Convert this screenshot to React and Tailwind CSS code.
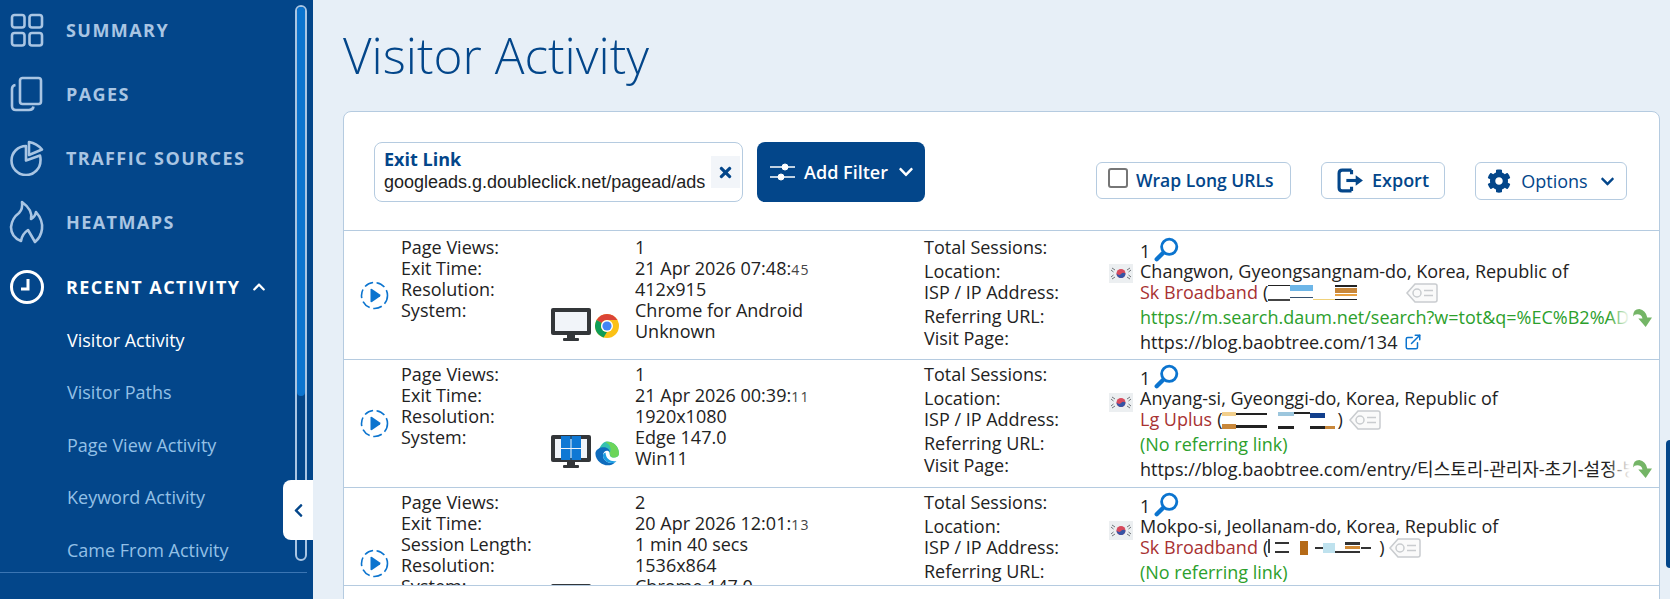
import React from "react";
import { FaCog, FaChevronDown, FaChevronUp, FaChevronLeft, FaTimes } from "react-icons/fa";
import { ExternalLink } from "lucide-react";

const SummaryIcon = () => (
  <svg width="34" height="34" viewBox="0 0 34 34" fill="none" stroke="currentColor" strokeWidth="2.6">
    <rect x="2" y="2" width="12.5" height="12.5" rx="2.5" />
    <rect x="19.5" y="2" width="12.5" height="12.5" rx="2.5" />
    <rect x="2" y="20" width="12.5" height="12.5" rx="2.5" />
    <rect x="19.5" y="20" width="12.5" height="12.5" rx="2.5" />
  </svg>
);

const PagesIcon = () => (
  <svg width="34" height="36" viewBox="0 0 34 36" fill="none" stroke="currentColor" strokeWidth="2.6">
    <rect x="10" y="2" width="21" height="26" rx="2.5" />
    <path d="M5.5 9 Q2 9.5 2 13 V30 Q2 34 6 34 H19 Q23 34 23.5 30.5" />
  </svg>
);

const TrafficIcon = () => (
  <svg width="36" height="36" viewBox="0 0 36 36" fill="none" stroke="currentColor" strokeWidth="2.6" strokeLinejoin="round">
    <path d="M17 6 A14.5 14.5 0 1 0 31.5 20.5 A14 14 0 0 0 31 15.5 L17 20.5 Z" />
    <path d="M20 2 Q28 3.5 33 9.5 L20 15 Z" />
  </svg>
);

const FlameIcon = () => (
  <svg width="36" height="44" viewBox="0 0 36 44" fill="none" stroke="currentColor" strokeWidth="2.6" strokeLinejoin="round">
    <path d="M13 2 Q24 10 22 19 Q26 17 27 12 Q34 20 33 29 Q32 37 26 42 Q22 35 19 30 Q13 34 12 41 Q2 37 2 27 Q3 18 10 13 Q14 9 13 2 Z" />
  </svg>
);

const ClockIcon = () => (
  <svg width="36" height="36" viewBox="0 0 36 36" fill="none" stroke="white" strokeWidth="3">
    <circle cx="18" cy="18" r="15.5" />
    <path d="M19 10 V20 H12" strokeWidth="3" />
  </svg>
);

const PlayIcon = () => (
  <svg width="29" height="31" viewBox="0 0 29 31" fill="none">
    <circle cx="14.5" cy="15.5" r="13" stroke="#0b74cf" strokeWidth="1.6" strokeDasharray="9 3.6" />
    <path d="M10.5 9.5 Q10.5 8.5 12 9 L20 14.5 Q21 15.5 20 16.5 L12 22 Q10.5 22.5 10.5 21.5 Z" fill="#0b74cf" />
  </svg>
);

const SearchIcon = () => (
  <svg width="25" height="25" viewBox="0 0 23 23" fill="none" stroke="#0b74cf">
    <circle cx="14" cy="9" r="7" strokeWidth="2.6" />
    <path d="M8.5 14.5 L2.5 20.5" strokeWidth="4" strokeLinecap="round" />
  </svg>
);

const TagIcon = () => (
  <svg width="34" height="22" viewBox="0 0 34 22" fill="none" stroke="#c9cccf" strokeWidth="1.5">
    <path d="M10 2 H30 Q32 2 32 4 V18 Q32 20 30 20 H10 L2 11 Z" fill="#fafafa" />
    <circle cx="12" cy="11" r="4" />
    <path d="M19 8.5 H28 M19 13.5 H28" />
  </svg>
);

const SlidersIcon = () => (
  <svg width="26" height="22" viewBox="0 0 26 22" fill="white" stroke="white">
    <path d="M0 6 H25 M0 16 H25" strokeWidth="1.6" />
    <circle cx="15" cy="6" r="3" />
    <circle cx="11" cy="16" r="3" />
  </svg>
);

const ExportIcon = () => (
  <svg width="27" height="25" viewBox="0 0 26 24" fill="none" stroke="#03468a" strokeWidth="3">
    <path d="M14 2 H5 Q2 2 2 5 V19 Q2 22 5 22 H14" />
    <path d="M14 2 V6 M14 18 V22" />
    <path d="M9 12 H20" />
    <path d="M18 7 L25 12 L18 17 Z" fill="#03468a" stroke="none" />
  </svg>
);

const GreenArrow = () => (
  <svg width="20" height="20" viewBox="0 0 19 19" fill="#74b566">
    <path d="M1 8 Q1 1 7 1 Q13 2 14.5 9 L19 9 L13 18 L6 10 L10 10 Q9 6 5 6 Q2 6 1 8 Z" />
  </svg>
);

const Flag = () => (
  <svg width="24" height="19" viewBox="0 0 24 19">
    <rect width="24" height="19" fill="#eceff1" />
    <circle cx="12" cy="9.5" r="4.5" fill="#d84a5c" />
    <path d="M7.5 9.5 A4.5 4.5 0 0 0 16.5 9.5 Q14 8 12 10 Q10 12 7.5 9.5 Z" fill="#3554a5" />
    <path d="M3 4 L6 6 M2 6 L4.5 8 M21 4 L18 6 M22 6 L19.5 8 M3 15 L6 13 M2 13 L4.5 11 M21 15 L18 13 M22 13 L19.5 11" stroke="#70757a" strokeWidth="1" />
  </svg>
);

const MonitorIcon = ({ win }) => (
  <svg width="40" height="34" viewBox="0 0 40 34">
    <rect width="40" height="27" rx="2" fill="#333639" />
    <rect x="4" y="4" width="32" height="19" fill="#f1f4f9" />
    <rect x="16" y="27" width="8" height="4" fill="#333639" />
    <rect x="12" y="30" width="16" height="3" rx="1" fill="#333639" />
    {win && (
      <g fill="#0f78d4">
        <rect x="10" y="1" width="9.5" height="12" />
        <rect x="20.5" y="1" width="9.5" height="12" />
        <rect x="10" y="14" width="9.5" height="11" />
        <rect x="20.5" y="14" width="9.5" height="11" />
      </g>
    )}
  </svg>
);

const ChromeIcon = () => (
  <svg width="24" height="24" viewBox="0 0 24 24">
    <circle cx="12" cy="12" r="12" fill="#fbc116" />
    <path d="M12 0 A12 12 0 0 1 22.4 6 L12 6 A6 6 0 0 0 6.8 9 L1.6 6 A12 12 0 0 1 12 0 Z" fill="#db4437" />
    <path d="M1.6 6 L6.8 9 A6 6 0 0 0 12 18 L8.6 23.5 A12 12 0 0 1 1.6 6 Z" fill="#0f9d58" />
    <circle cx="12" cy="12" r="6" fill="white" />
    <circle cx="12" cy="12" r="4.6" fill="#4285f4" />
  </svg>
);

const EdgeIcon = () => (
  <svg width="24" height="25" viewBox="0 0 24 24">
    <path d="M12 0 C19 0 24 5 24 12 C24 15 21 16.5 18 16 C14 15.5 15 12 14 10 C12 7 6 7 3 11 C5 4 8 0 12 0 Z" fill="#35c1b0" />
    <path d="M24 12 C24 15 21 16.5 18 16 C15 15.5 15 13 15 11 C17 6 14 2 10 0.5 C18 -1 24 5 24 12 Z" fill="#6cd55a" />
    <path d="M0.5 11 C2 5 14 3 15 11 C13 8 8 9 8 14 C8 19 14 23 20 21 C16 25 9 24.5 5 21 C2 18.5 0 15 0.5 11 Z" fill="#0f6cbd" />
    <path d="M8 14 C8 19 14 23 20 21 L21.5 19.5 C16 20.5 11 18 10.5 11 C9 11.5 8 12.5 8 14 Z" fill="#1b9de2" />
  </svg>
);

// redacted ip stripes, each bar is [x, y, w, h, colour]
const Redacted = ({ width, bars }) => (
  <svg width={width} height="21" viewBox={`0 0 ${width} 21`}>
    {bars.map((b, i) => (
      <rect key={i} x={b[0]} y={b[1]} width={b[2]} height={b[3]} fill={b[4]} />
    ))}
  </svg>
);

const ip1 = [
  [0, 3, 22, 1, "#222"], [0, 17, 22, 2, "#444"], [22, 3, 23, 6, "#6db6e8"], [22, 15, 23, 1, "#35506e"],
  [45, 17, 22, 1, "#f1d27a"], [67, 3, 22, 2, "#222"], [67, 6, 22, 5, "#c8873a"], [67, 12, 22, 2, "#e8a040"], [67, 17, 22, 1, "#222"],
];
const ip2 = [
  [0, 3, 14, 4, "#f2cf8c"], [14, 4, 31, 2, "#222"], [0, 15, 14, 5, "#c8873a"], [14, 16, 31, 3, "#222"],
  [56, 3, 16, 4, "#9cc6dd"], [72, 3, 16, 2, "#222"], [56, 17, 16, 3, "#222"], [88, 4, 15, 5, "#123f8c"],
  [88, 17, 15, 3, "#222"], [103, 17, 10, 3, "#c8873a"],
];
const ip3 = [
  [0, 2, 2, 14, "#444"], [7, 5, 14, 2, "#333"], [7, 14, 14, 2, "#333"], [32, 4, 8, 14, "#b56a18"],
  [47, 10, 8, 2, "#333"], [55, 6, 12, 10, "#bfe2ee"], [67, 14, 10, 2, "#333"], [77, 5, 15, 3, "#333"],
  [77, 9, 15, 3, "#d18a35"], [77, 14, 15, 2, "#333"], [93, 10, 10, 2, "#333"],
];

const navItems = [
  { label: "SUMMARY", icon: <SummaryIcon /> },
  { label: "PAGES", icon: <PagesIcon /> },
  { label: "TRAFFIC SOURCES", icon: <TrafficIcon /> },
  { label: "HEATMAPS", icon: <FlameIcon /> },
];

const subItems = ["Visitor Paths", "Page View Activity", "Keyword Activity", "Came From Activity"];

const rows = [
  {
    height: "h-[129px]",
    pad: "pt-[6px]",
    stats: [["Page Views:", "1"], ["Exit Time:", "21 Apr 2026 07:48:", "45"], ["Resolution:", "412x915"], ["System:", "Chrome for Android"], ["", "Unknown"]],
    browser: <ChromeIcon />,
    win: false,
    location: "Changwon, Gyeongsangnam-do, Korea, Republic of",
    isp: "Sk Broadband",
    ip: <Redacted width={89} bars={ip1} />,
    tagGap: "ml-[48px]",
    referrer: "https://m.search.daum.net/search?w=tot&q=%EC%B2%AD%EC%A3%BC",
    refFade: true,
    page: "https://blog.baobtree.com/134",
  },
  {
    height: "h-[128px]",
    pad: "pt-[4px]",
    stats: [["Page Views:", "1"], ["Exit Time:", "21 Apr 2026 00:39:", "11"], ["Resolution:", "1920x1080"], ["System:", "Edge 147.0"], ["", "Win11"]],
    browser: <EdgeIcon />,
    win: true,
    location: "Anyang-si, Gyeonggi-do, Korea, Republic of",
    isp: "Lg Uplus",
    ip: <><Redacted width={113} bars={ip2} /><span className="ml-[2px]">)</span></>,
    tagGap: "ml-[5px]",
    referrer: "(No referring link)",
    page: "https://blog.baobtree.com/entry/티스토리-관리자-초기-설정-방법",
    pageFade: true,
  },
  {
    height: "h-[152px]",
    pad: "pt-[4px]",
    stats: [["Page Views:", "2"], ["Exit Time:", "20 Apr 2026 12:01:", "13"], ["Session Length:", "1 min 40 secs"], ["Resolution:", "1536x864"], ["System:", "Chrome 147.0"], ["", "Win11"]],
    browser: <ChromeIcon />,
    win: true,
    location: "Mokpo-si, Jeollanam-do, Korea, Republic of",
    isp: "Sk Broadband",
    ip: <><Redacted width={103} bars={ip3} /><span className="ml-[8px]">)</span></>,
    tagGap: "ml-[3px]",
    referrer: "(No referring link)",
    page: "https://blog.baobtree.com/",
  },
];

const Sidebar = () => (
  <aside className="relative w-[313px] h-[599px] shrink-0 bg-[#03468a] overflow-hidden">
    <nav className="w-[296px] -mt-[2px]">
      {navItems.map((item) => (
        <div key={item.label} className="flex items-center h-[64px] text-[#a9c5e3]">
          <div className="flex w-[66px] justify-center pr-[12px] shrink-0">{item.icon}</div>
          <span className="text-[18px] font-bold tracking-[0.08em] whitespace-nowrap">{item.label}</span>
        </div>
      ))}
      <div className="flex items-center h-[66px] text-white">
        <div className="flex w-[66px] justify-center pr-[12px] shrink-0"><ClockIcon /></div>
        <span className="text-[18px] font-bold tracking-[0.08em] whitespace-nowrap">RECENT ACTIVITY</span>
        <FaChevronUp className="ml-[12px] text-[14px]" />
      </div>
      <div className="pl-[67px] text-[18px] leading-[24px]">
        <div className="h-[52px] pt-[8px] text-white">Visitor Activity</div>
        {subItems.map((name) => (
          <div key={name} className="h-[52.5px] pt-[8px] text-[#93c0e6]">{name}</div>
        ))}
      </div>
    </nav>

    {/* scroll bar over the nav */}
    <div className="absolute left-[295px] top-[5px] w-[12px] h-[556px] rounded-full border-2 border-[#a9c5e3]">
      <div className="h-[389px] rounded-full bg-[#0b74cf]" />
    </div>
    <div className="absolute left-0 top-[572px] w-[307px] border-t border-[#3b75b3]" />
    <div className="absolute right-0 top-[480px] flex h-[60px] w-[30px] items-center justify-center rounded-l-lg bg-white text-[#03468a]">
      <FaChevronLeft className="text-[15px]" />
    </div>
  </aside>
);

const Toolbar = () => (
  <div className="flex h-[119px] items-start border-b border-[#b5cbe0] pl-[30px] pr-[32px] pt-[30px]">
    <div className="flex h-[60px] w-[369px] items-center justify-between rounded-lg border border-[#b5cbe0] pl-[9px] pr-[2px]">
      <div>
        <div className="text-[18px] font-bold leading-[22px] text-[#03468a] -mt-[3px]">Exit Link</div>
        <div className="font-['Liberation_Sans',sans-serif] text-[18px] leading-[24px] text-[#222]">googleads.g.doubleclick.net/pagead/ads</div>
      </div>
      <div className="flex h-[32px] w-[29px] items-center justify-center bg-[#f2f5f9] text-[#03468a]">
        <FaTimes className="text-[17px]" />
      </div>
    </div>
    <div className="ml-[14px] flex h-[60px] w-[168px] items-center justify-center gap-[8px] rounded-lg bg-[#03468a] pl-[2px] font-semibold text-white">
      <SlidersIcon />
      <span className="text-[18px]">Add Filter</span>
      <FaChevronDown className="ml-[2px] text-[16px]" />
    </div>
    <div className="ml-auto flex items-start pt-[20px] text-[18px] font-semibold text-[#03468a]">
      <div className="flex h-[37px] w-[195px] items-center rounded-md border border-[#b5cbe0] pl-[11px]">
        <span className="mb-[5px] h-[20px] w-[20px] rounded-[3px] border-2 border-[#767676] bg-white" />
        <span className="ml-[8px] whitespace-nowrap text-[17.5px]">Wrap Long URLs</span>
      </div>
      <div className="ml-[30px] flex h-[37px] w-[124px] items-center justify-center gap-[8px] rounded-md border border-[#b5cbe0]">
        <ExportIcon />
        <span>Export</span>
      </div>
      <div className="ml-[30px] flex h-[38px] w-[152px] items-center justify-center gap-[10px] rounded-md border border-[#b5cbe0]">
        <FaCog className="text-[24px]" />
        <span className="font-normal">Options</span>
        <FaChevronDown className="ml-[2px] text-[15px]" />
      </div>
    </div>
  </div>
);

const FadeArrow = () => (
  <div className="absolute right-0 top-0 flex h-[24px] w-[44px] items-center justify-end bg-gradient-to-r from-transparent via-white to-white">
    <GreenArrow />
  </div>
);

const Row = ({ row }) => (
  <div className={`flex ${row.height} shrink-0 border-b border-[#b5cbe0] text-[18px] text-[#222] overflow-hidden`}>
    <div className="flex w-[57px] shrink-0 items-center justify-center pl-[4px]"><PlayIcon /></div>

    <div className={`w-[523px] shrink-0 ${row.pad}`}>
      {row.stats.map(([label, value, secs], i) => (
        <div key={i} className="flex h-[21px] items-center leading-[21px]">
          <span className="w-[150px] shrink-0 whitespace-nowrap">{label}</span>
          <span className="flex h-0 w-[84px] shrink-0 items-center">
            {label === "System:" && (
              <span className="flex items-center gap-[4px] pt-[29px]">
                <MonitorIcon win={row.win} />
                <span className="pt-[2px]">{row.browser}</span>
              </span>
            )}
          </span>
          <span className="whitespace-nowrap">
            {value}
            {secs && <span className="text-[14px] tracking-[0.1em] text-[#444]">{secs}</span>}
          </span>
        </div>
      ))}
    </div>

    <div className={`w-[185px] shrink-0 ${row.pad} leading-[21px]`}>
      <div className="h-[24px]">Total Sessions:</div>
      <div className="h-[21px]">Location:</div>
      <div className="h-[24px]">ISP / IP Address:</div>
      <div className="h-[22px]">Referring URL:</div>
      <div className="h-[21px]">Visit Page:</div>
    </div>

    <div className="w-[31px] shrink-0 pt-[33px]"><Flag /></div>

    <div className={`w-[512px] shrink-0 ${row.pad} leading-[21px]`}>
      <div className="flex h-[24px] items-start gap-[4px] pt-[4px]">
        <span>1</span>
        <span className="-mt-[4px]"><SearchIcon /></span>
      </div>
      <div className="h-[21px] whitespace-nowrap">{row.location}</div>
      <div className="flex h-[24px] items-center whitespace-nowrap pb-[3px]">
        <span className="text-[#a83232]">{row.isp}</span>
        <span className="ml-[5px]">(</span>
        {row.ip}
        <span className={row.tagGap}><TagIcon /></span>
      </div>
      <div className="relative h-[24px] overflow-hidden whitespace-nowrap pt-[1px] text-[#2ca02c]">
        {row.referrer}
        {row.refFade && <FadeArrow />}
      </div>
      <div className="relative flex h-[24px] items-center overflow-hidden whitespace-nowrap font-['Open_Sans','Noto_Sans_CJK_KR',sans-serif]">
        {row.page}
        {row.pageFade ? <FadeArrow /> : <ExternalLink className="ml-[7px] text-[#0b74cf]" size={18} />}
      </div>
    </div>
  </div>
);

export default function App() {
  return (
    <div className="relative flex h-[599px] w-[1670px] overflow-hidden bg-[#e7eff7] font-['Open_Sans',sans-serif]">
      <Sidebar />
      <main className="w-[1347px] pl-[30px]">
        <h1 className="h-[111px] pt-[20px] text-[49.5px] font-light leading-[70px] text-[#03468a]">Visitor Activity</h1>
        <div className="h-[520px] w-[1317px] rounded-t-lg border border-[#b5cbe0] bg-white">
          <Toolbar />
          <div className="flex h-[355px] flex-col overflow-hidden border-b border-[#b5cbe0]">
            {rows.map((row) => (
              <Row key={row.location} row={row} />
            ))}
          </div>
        </div>
      </main>
      <div className="absolute right-0 top-[440px] h-[128px] w-[4px] rounded-l-md bg-[#03468a]" />
    </div>
  );
}
